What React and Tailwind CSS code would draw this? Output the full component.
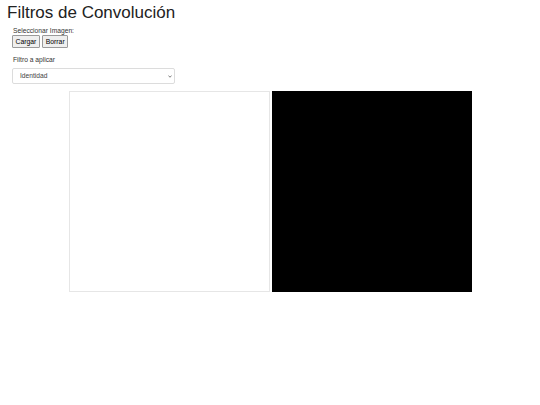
import React from "react";

export default function App() {
  return (
    <div
      className="w-[540px] h-[405px] bg-white text-[#222]"
      style={{ fontFamily: '"Liberation Sans", Arial, sans-serif' }}
    >
      <h1 className="text-[17px] leading-[20px] pt-[3px] pl-[7px] font-normal text-[#222]">
        Filtros de Convolución
      </h1>
      <div className="pl-[12px]">
        <div className="mt-[3px] pl-[1px] text-[6.7px] leading-[9px] text-[#333]">
          Seleccionar Imagen:
        </div>
        <div className="flex gap-[2.5px]">
          <button className="h-[13px] px-[2.5px] text-[6.8px] leading-[11px] bg-[#efefef] border border-[#9a9a9a] rounded-[1px] text-black">
            Cargar
          </button>
          <button className="h-[13px] px-[2.5px] text-[6.8px] leading-[11px] bg-[#efefef] border border-[#9a9a9a] rounded-[1px] text-black">
            Borrar
          </button>
        </div>
        <div className="mt-[7px] pl-[1px] text-[6.7px] leading-[9px] text-[#333]">
          Filtro a aplicar
        </div>
        <div className="relative mt-[4px] w-[163px] h-[16px] flex">
          <select
            defaultValue="identidad"
            className="block appearance-none w-full h-[16px] border border-[#dcdcdc] rounded-[2px] bg-white pl-[7px] text-[6.7px] leading-[14px] text-[#444] outline-none"
          >
            <option value="identidad">Identidad</option>
          </select>
          <svg
            className="absolute right-[3px] top-[6.5px] pointer-events-none"
            width="4"
            height="3"
            viewBox="0 0 10 8"
          >
            <path d="M1 1.5 L5 6 L9 1.5" fill="none" stroke="#666" strokeWidth="2.2" />
          </svg>
        </div>
      </div>
      <div className="mt-[7px] flex justify-center gap-[2px]">
        <div className="w-[201px] h-[201px] border border-[#e6e6e6] bg-white" />
        <div className="w-[200px] h-[201px] bg-black" />
      </div>
    </div>
  );
}
